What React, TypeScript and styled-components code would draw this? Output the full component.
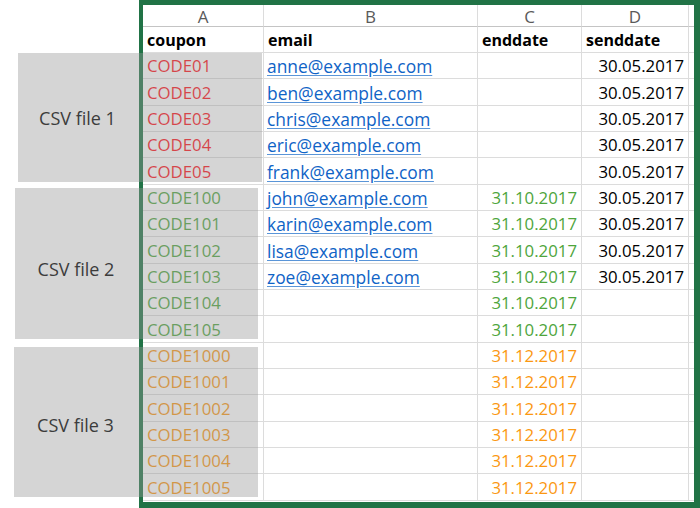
import styled, { createGlobalStyle } from "styled-components";

type Group = "red" | "green" | "orange";

interface Row {
    code: string
    group: Group
    email?: string
    enddate?: string
    senddate?: string
}

const rows: Row[] = [
    { code: "CODE01", group: "red", email: "anne@example.com", senddate: "30.05.2017" },
    { code: "CODE02", group: "red", email: "ben@example.com", senddate: "30.05.2017" },
    { code: "CODE03", group: "red", email: "chris@example.com", senddate: "30.05.2017" },
    { code: "CODE04", group: "red", email: "eric@example.com", senddate: "30.05.2017" },
    { code: "CODE05", group: "red", email: "frank@example.com", senddate: "30.05.2017" },
    { code: "CODE100", group: "green", email: "john@example.com", enddate: "31.10.2017", senddate: "30.05.2017" },
    { code: "CODE101", group: "green", email: "karin@example.com", enddate: "31.10.2017", senddate: "30.05.2017" },
    { code: "CODE102", group: "green", email: "lisa@example.com", enddate: "31.10.2017", senddate: "30.05.2017" },
    { code: "CODE103", group: "green", email: "zoe@example.com", enddate: "31.10.2017", senddate: "30.05.2017" },
    { code: "CODE104", group: "green", enddate: "31.10.2017" },
    { code: "CODE105", group: "green", enddate: "31.10.2017" },
    { code: "CODE1000", group: "orange", enddate: "31.12.2017" },
    { code: "CODE1001", group: "orange", enddate: "31.12.2017" },
    { code: "CODE1002", group: "orange", enddate: "31.12.2017" },
    { code: "CODE1003", group: "orange", enddate: "31.12.2017" },
    { code: "CODE1004", group: "orange", enddate: "31.12.2017" },
    { code: "CODE1005", group: "orange", enddate: "31.12.2017" },
]

const bands = [
    { label: "CSV file 1", left: 18, top: 53, right: 262, bottom: 182, shift: 0 },
    { label: "CSV file 2", left: 15, top: 188, right: 258, bottom: 339, shift: 10 },
    { label: "CSV file 3", left: 14, top: 347, right: 258, bottom: 497, shift: 6 },
]

const groupColors: Record<Group, string> = {
    red: "#ff1018",
    green: "#4ea53c",
    orange: "#fb9812",
}

const GlobalStyle = createGlobalStyle`
  html, body {
    margin: 0;
    padding: 0;
    background: #ffffff;
  }
  body {
    font-family: "Open Sans", "Liberation Sans", sans-serif;
  }
`

function App() {
    return <Page>
        <GlobalStyle />
        <Gutter />
        <Frame>
            <Sheet>
                <ColHead>A</ColHead>
                <ColHead>B</ColHead>
                <ColHead>C</ColHead>
                <ColHead>D</ColHead>
                <ColHead />

                <Cell><Bold>coupon</Bold></Cell>
                <Cell><Bold>email</Bold></Cell>
                <Cell><Bold>enddate</Bold></Cell>
                <Cell><Bold>senddate</Bold></Cell>
                <Cell />

                {rows.map(row => <SheetRow key={row.code} row={row} />)}
            </Sheet>
        </Frame>
        {bands.map(band => (
            <Band
                key={band.label}
                style={{
                    left: band.left,
                    top: band.top,
                    width: band.right - band.left,
                    height: band.bottom - band.top,
                }}
            >
                <BandLabel $width={137 - band.left} $shift={band.shift}>
                    {band.label}
                </BandLabel>
            </Band>
        ))}
    </Page>
}

function SheetRow({ row }: { row: Row }) {
    return <>
        <Cell><Code $color={groupColors[row.group]}>{row.code}</Code></Cell>
        <Cell>{row.email && <Link>{row.email}</Link>}</Cell>
        <Cell $right>{row.enddate && <Date $color={groupColors[row.group]}>{row.enddate}</Date>}</Cell>
        <Cell $right>{row.senddate && <Date $color="#000000">{row.senddate}</Date>}</Cell>
        <Cell />
    </>
}

const Page = styled.div`
  position: relative;
  width: 700px;
  height: 508px;
  display: flex;
  overflow: hidden;
`

const Gutter = styled.div`
  flex: 0 0 139px;
`

const Frame = styled.div`
  flex: 1;
  border-style: solid;
  border-color: #217346;
  border-width: 5px 6px 6px 4px;
  overflow: hidden;
`

const Sheet = styled.div`
  display: grid;
  grid-template-columns: 121px 214px 104px 107px 1fr;
  grid-template-rows: 22px 26px repeat(17, 26.33px) 1fr;
  height: 100%;
`

const ColHead = styled.div`
  display: flex;
  align-items: center;
  justify-content: center;
  border-right: 1px solid #dcdcdc;
  border-bottom: 1px solid #c4c4c4;
  color: #5a5a5a;
  font-size: 17px;
  line-height: 1;
  padding-top: 2px;
`

const Cell = styled.div<{ $right?: boolean }>`
  display: flex;
  align-items: flex-end;
  justify-content: ${p => p.$right ? "flex-end" : "flex-start"};
  padding: 0 4px 0 4px;
  border-right: 1px solid #dcdcdc;
  border-bottom: 1px solid #dcdcdc;
  font-size: 16.8px;
  line-height: 24px;
  white-space: nowrap;
  overflow: hidden;
`

const Bold = styled.span`
  font-size: 16px;
  font-weight: 700;
  color: #000000;
`

const Code = styled.span<{ $color: string }>`
  color: ${p => p.$color};
`

const Link = styled.span`
  font-size: 17.4px;
  color: #0f63c6;
  text-decoration: underline;
  text-decoration-color: #5a95d8;
  text-underline-offset: 2px;
  margin-left: -1px;
`

const Date = styled.span<{ $color: string }>`
  color: ${p => p.$color};
`

const Band = styled.div`
  position: absolute;
  display: flex;
  align-items: center;
  background: rgba(150, 150, 150, 0.4);
`

const BandLabel = styled.div<{ $width: number; $shift: number }>`
  width: ${p => p.$width}px;
  padding-top: ${p => p.$shift}px;
  text-align: center;
  color: #3c3c3c;
  font-size: 18px;
`

export default App
